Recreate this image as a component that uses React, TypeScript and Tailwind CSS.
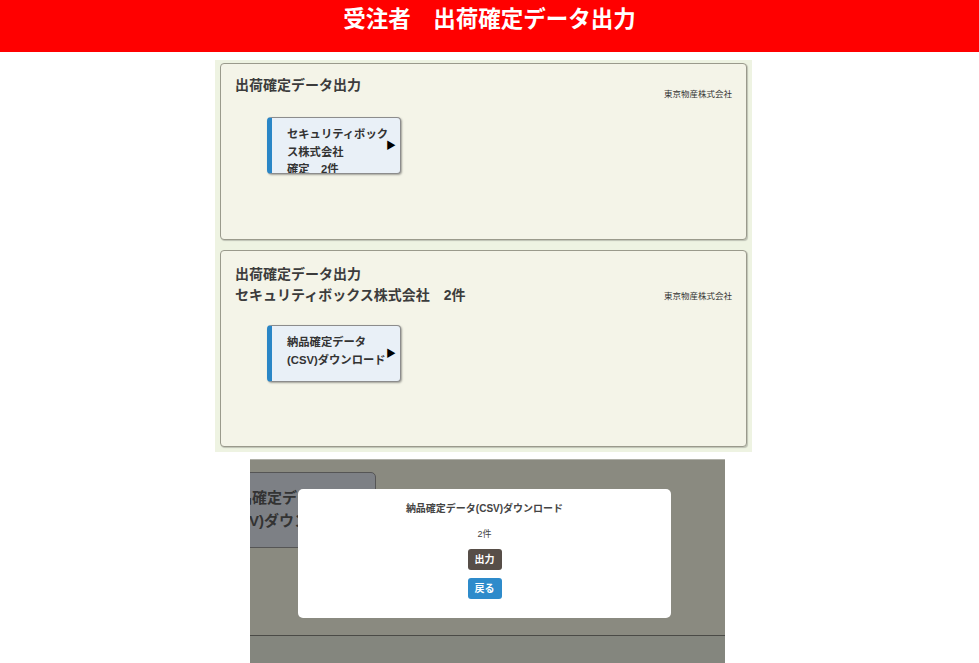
const font = { fontFamily: '"Liberation Sans", "Noto Sans CJK JP", sans-serif' };

function MenuButton({ lines }: { lines: string[] }) {
  return (
    <div className="relative ml-[32px] h-[57px] w-[134px] overflow-hidden rounded-[4px] border border-[#8c8c8c] border-l-[5px] border-l-[#2a86c6] bg-[#e9f0f7] shadow-[1px_1px_2px_rgba(0,0,0,0.35)]">
      <div className="pl-[15px] pt-[8px] text-[11.3px] leading-[17.5px] font-bold text-[#333]">
        {lines.map((l, i) => (
          <div key={i} className="whitespace-nowrap">{l}</div>
        ))}
      </div>
      <span className="absolute left-[114px] top-[23px] text-[10px] leading-none text-black">▶</span>
    </div>
  );
}

function Card({ height, title, button }: { height: string; title: string[]; button: string[] }) {
  const two = title.length > 1;
  return (
    <div className={`${height} rounded-[4px] border border-[#9a9a8c] bg-[#f4f4e8] px-[14px] shadow-[1px_1px_1px_rgba(0,0,0,0.2)] ${two ? "pt-[13px]" : "pt-[11px]"}`}>
      <div className="flex justify-between">
        <div className="text-[14px] leading-[21px] font-bold text-[#3c3c3c]">
          {title.map((t, i) => (
            <div key={i}>{t}</div>
          ))}
        </div>
        <div className={`${two ? "mt-[26px]" : "mt-[13px]"} text-[8.5px] leading-[12px] text-[#333]`}>東京物産株式会社</div>
      </div>
      <div className={two ? "mt-[19px]" : "mt-[17px]"}>
        <MenuButton lines={button} />
      </div>
    </div>
  );
}

export default function App() {
  return (
    <div className="min-h-[663px] bg-white" style={font}>
      <header className="flex h-[52px] justify-center bg-[#ff0000] pt-[6px]">
        <h1 className="text-[22.5px] leading-[28px] font-bold text-white">受注者　出荷確定データ出力</h1>
      </header>

      <section className="ml-[215px] mt-[8px] flex w-[537px] flex-col gap-[10px] bg-[#eef3e2] px-[5px] pt-[3px] pb-[5px]">
        <Card
          height="h-[177px]"
          title={["出荷確定データ出力"]}
          button={["セキュリティボック", "ス株式会社", "確定　2件"]}
        />
        <Card
          height="h-[197px]"
          title={["出荷確定データ出力", "セキュリティボックス株式会社　2件"]}
          button={["納品確定データ", "(CSV)ダウンロード"]}
        />
      </section>

      <div className="relative ml-[250px] mt-[7px] flex h-[204px] w-[475px] flex-col overflow-hidden border-t border-[#b0b0a8] bg-[#8a8a80]">
        <div className="mt-[12px] -ml-[20px] h-[76px] w-[146px] rounded-[5px] border border-[#555] bg-[#7d8085] pt-[13px] pl-[7px] text-[15px] leading-[23px] font-bold text-[#333]">
          <div className="-ml-[1px] whitespace-nowrap">品確定データ</div>
          <div className="ml-[1px] whitespace-nowrap">SV)ダウンロード</div>
        </div>
        <div className="mt-auto h-[28px] border-t border-[#4a4a46] bg-[#84867e]" />

        <div className="absolute left-[48px] top-[29px] flex h-[129px] w-[373px] flex-col items-center rounded-[5px] bg-white pt-[13px]">
          <div className="text-[10px] leading-[14px] font-bold text-[#444]">納品確定データ(CSV)ダウンロード</div>
          <div className="mt-[12px] text-[9px] leading-[12px] text-[#444]">2件</div>
          <div className="mt-[9px] flex h-[21px] w-[34px] items-center justify-center rounded-[3px] bg-[#574e48] text-[10px] font-bold text-white">出力</div>
          <div className="mt-[8px] flex h-[21px] w-[34px] items-center justify-center rounded-[3px] bg-[#2e8bcb] text-[10px] font-bold text-white">戻る</div>
        </div>
      </div>
    </div>
  );
}
